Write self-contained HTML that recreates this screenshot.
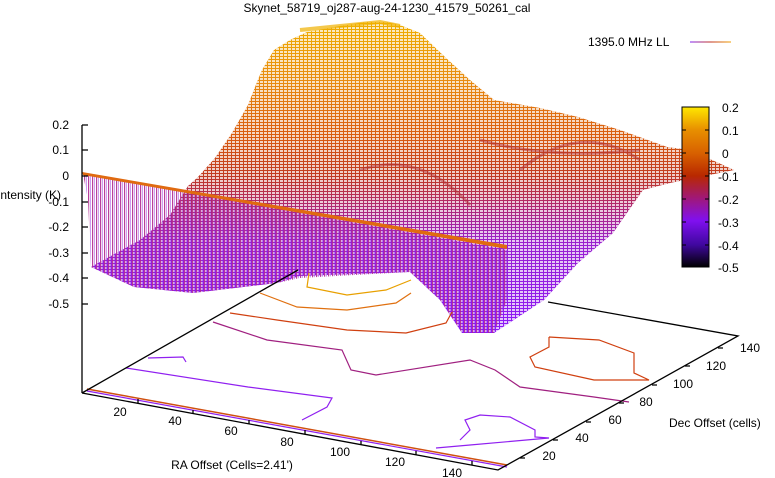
<!DOCTYPE html>
<html><head><meta charset="utf-8"><style>
html,body{margin:0;padding:0;background:#fff;width:775px;height:478px;overflow:hidden}
svg text{font-family:"Liberation Sans",sans-serif;font-size:12px;fill:#000}
</style></head><body>
<svg width="775" height="478" viewBox="0 0 775 478" xmlns="http://www.w3.org/2000/svg">
<defs>
<linearGradient id="cb" x1="0" y1="0" x2="0" y2="1">
<stop offset="0" stop-color="#ffe800"/>
<stop offset="0.14" stop-color="#e89000"/>
<stop offset="0.29" stop-color="#d86000"/>
<stop offset="0.43" stop-color="#b82800"/>
<stop offset="0.57" stop-color="#a01878"/>
<stop offset="0.71" stop-color="#8010f0"/>
<stop offset="0.86" stop-color="#4008a0"/>
<stop offset="1" stop-color="#000"/>
</linearGradient>
<linearGradient id="sf" x1="0" y1="20" x2="0" y2="330" gradientUnits="userSpaceOnUse">
<stop offset="0" stop-color="#f0b000"/>
<stop offset="0.2" stop-color="#e88a10"/>
<stop offset="0.38" stop-color="#d85a10"/>
<stop offset="0.5" stop-color="#c03a20"/>
<stop offset="0.6" stop-color="#b02870"/>
<stop offset="0.72" stop-color="#9a20d0"/>
<stop offset="1" stop-color="#8c18f8"/>
</linearGradient>
<pattern id="mesh" width="4" height="3" patternUnits="userSpaceOnUse">
<rect x="0" y="0" width="3" height="2" fill="#fff" opacity="0.75"/>
</pattern>
<pattern id="curt" width="4" height="10" patternUnits="userSpaceOnUse">
<rect x="0" y="0" width="1.2" height="10" fill="#b02a90"/>
<rect x="2.2" y="0" width="0.8" height="10" fill="#8c20e0" opacity="0.6"/>
</pattern>
</defs>

<text x="387" y="12" text-anchor="middle">Skynet_58719_oj287-aug-24-1230_41579_50261_cal</text>

<path id="surf" d="M386,22 L366,22 L340,26 L307,32 L290,40 L274,50 L262,70 L257,82 L248,105 L232,133 L215,158 L198,177 L188,186 L170,215 L140,240 L100,262 L91,267 L134,287 L193,293 L277,283 L300,276 L410,272 L440,300 L462,333 L494,333 L544,300 L578,263 L613,233 L643,190 L670,183 L734,170 L690,150 L667,147 L620,130 L578,117 L540,108 L494,100 L470,80 L445,57 L420,33 L400,25 Z" fill="url(#sf)"/>
<path d="M386,22 L366,22 L340,26 L307,32 L290,40 L274,50 L262,70 L257,82 L248,105 L232,133 L215,158 L198,177 L188,186 L170,215 L140,240 L100,262 L91,267 L134,287 L193,293 L277,283 L300,276 L410,272 L440,300 L462,333 L494,333 L544,300 L578,263 L613,233 L643,190 L670,183 L734,170 L690,150 L667,147 L620,130 L578,117 L540,108 L494,100 L470,80 L445,57 L420,33 L400,25 Z" fill="url(#mesh)"/>
<path d="M360,170 Q420,150 470,205 M480,140 Q550,160 640,150 M520,170 Q580,120 640,160" stroke="#b02a30" stroke-width="3" fill="none" opacity="0.5"/>
<path d="M300,30 L380,22 L400,26" stroke="#f0b000" stroke-width="4" fill="none" opacity="0.7"/>

<path d="M83,174 L507,250 L507,300 L494,333 L462,333 L440,300 L410,272 L300,278 L277,283 L193,293 L134,287 L91,267 L88,200 Z" fill="url(#curt)" opacity="0.9"/>
<path d="M82,172 L507,245 L507,249 L83,175 Z" fill="#e06a10"/>

<g fill="none" stroke-width="1.2">
<path d="M309,273 L307,287 L347,295 L386,290 L411,280" stroke="#e8a000"/>
<path d="M260,293 L297,307 L347,310 L396,303 L411,293" stroke="#e07010"/>
<path d="M230,313 L277,320 L347,330 L406,333 L446,323 L452,312" stroke="#d04010"/>
<path d="M213,322 L267,340 L342,350 L351,370 L376,375 L470,360 L495,370 L520,387 L594,397 L629,402" stroke="#a02080"/>
<path d="M549,337 L599,340 L634,353 L634,373 L649,380 L594,380 L535,367 L530,357 L549,347 L549,337" stroke="#d04010"/>
<path d="M126,368 L248,387 L332,398 L327,407 L302,420" stroke="#9020f0"/>
<path d="M148,358 L183,357 L186,362" stroke="#9020f0"/>
<path d="M436,448 L470,445 L549,438 L535,437 L535,430 L510,417 L480,415 L465,420 L470,430 L460,440" stroke="#9020f0"/>
<path d="M87,389 L507,465" stroke="#d05010" stroke-width="1.5"/>
<path d="M87,391 L507,467" stroke="#9020f0"/>
</g>

<g stroke="#000" stroke-width="1.3" fill="none">
<path d="M82,125 L82,393"/>
<path d="M82,125h6M82,150h6M82,176h6M82,202h6M82,227h6M82,253h6M82,278h6M82,304h6"/>
<path d="M82,393 L498,470 L738,336 L548,302"/>
<path d="M82,393 L298,270"/>
<path d="M138,403l0,-4M193,414l0,-4M249,424l0,-4M305,434l0,-4M361,445l0,-4M416,455l0,-4M472,465l0,-4"/>
<path d="M520,458l5,0M553,440l5,0M586,422l5,0M619,403l5,0M652,385l5,0M685,366l5,0M718,348l5,0"/>
</g>
<g text-anchor="end">
<text x="69" y="129">0.2</text><text x="69" y="154">0.1</text><text x="69" y="180">0</text>
<text x="69" y="206">-0.1</text><text x="69" y="231">-0.2</text><text x="69" y="257">-0.3</text>
<text x="69" y="282">-0.4</text><text x="69" y="308">-0.5</text>
</g>
<text x="-3" y="199">Intensity (K)</text>
<g text-anchor="middle">
<text x="120" y="416">20</text><text x="175" y="425">40</text><text x="231" y="435">60</text>
<text x="287" y="446">80</text><text x="340" y="456">100</text><text x="395" y="466">120</text><text x="452" y="477">140</text>
<text x="232" y="469">RA Offset (Cells=2.41')</text>
<text x="549" y="460">20</text><text x="582" y="442">40</text><text x="615" y="424">60</text>
<text x="646" y="406">80</text><text x="683" y="388">100</text><text x="716" y="370">120</text><text x="750" y="352">140</text>
</g>
<text x="669" y="427">Dec Offset (cells)</text>

<linearGradient id="lg" x1="690" x2="731" y1="0" y2="0" gradientUnits="userSpaceOnUse"><stop offset="0" stop-color="#8020f0"/><stop offset="0.5" stop-color="#c03020"/><stop offset="1" stop-color="#f0a000"/></linearGradient>
<text x="588" y="46">1395.0 MHz LL</text>
<line x1="690" y1="42" x2="731" y2="42" stroke="url(#lg)" stroke-width="1"/>

<rect x="682" y="107" width="27" height="160" fill="url(#cb)" stroke="#000" stroke-width="1"/>
<g stroke="#000"><path d="M682,130h4M682,153h4M682,176h4M682,199h4M682,222h4M682,245h4M705,130h4M705,153h4M705,176h4M705,199h4M705,222h4M705,245h4"/></g>
<g>
<text x="722" y="112">0.2</text><text x="722" y="135">0.1</text><text x="722" y="158">0</text>
<text x="718" y="181">-0.1</text><text x="718" y="204">-0.2</text><text x="718" y="227">-0.3</text>
<text x="718" y="250">-0.4</text><text x="718" y="272">-0.5</text>
</g>
</svg>
</body></html>
